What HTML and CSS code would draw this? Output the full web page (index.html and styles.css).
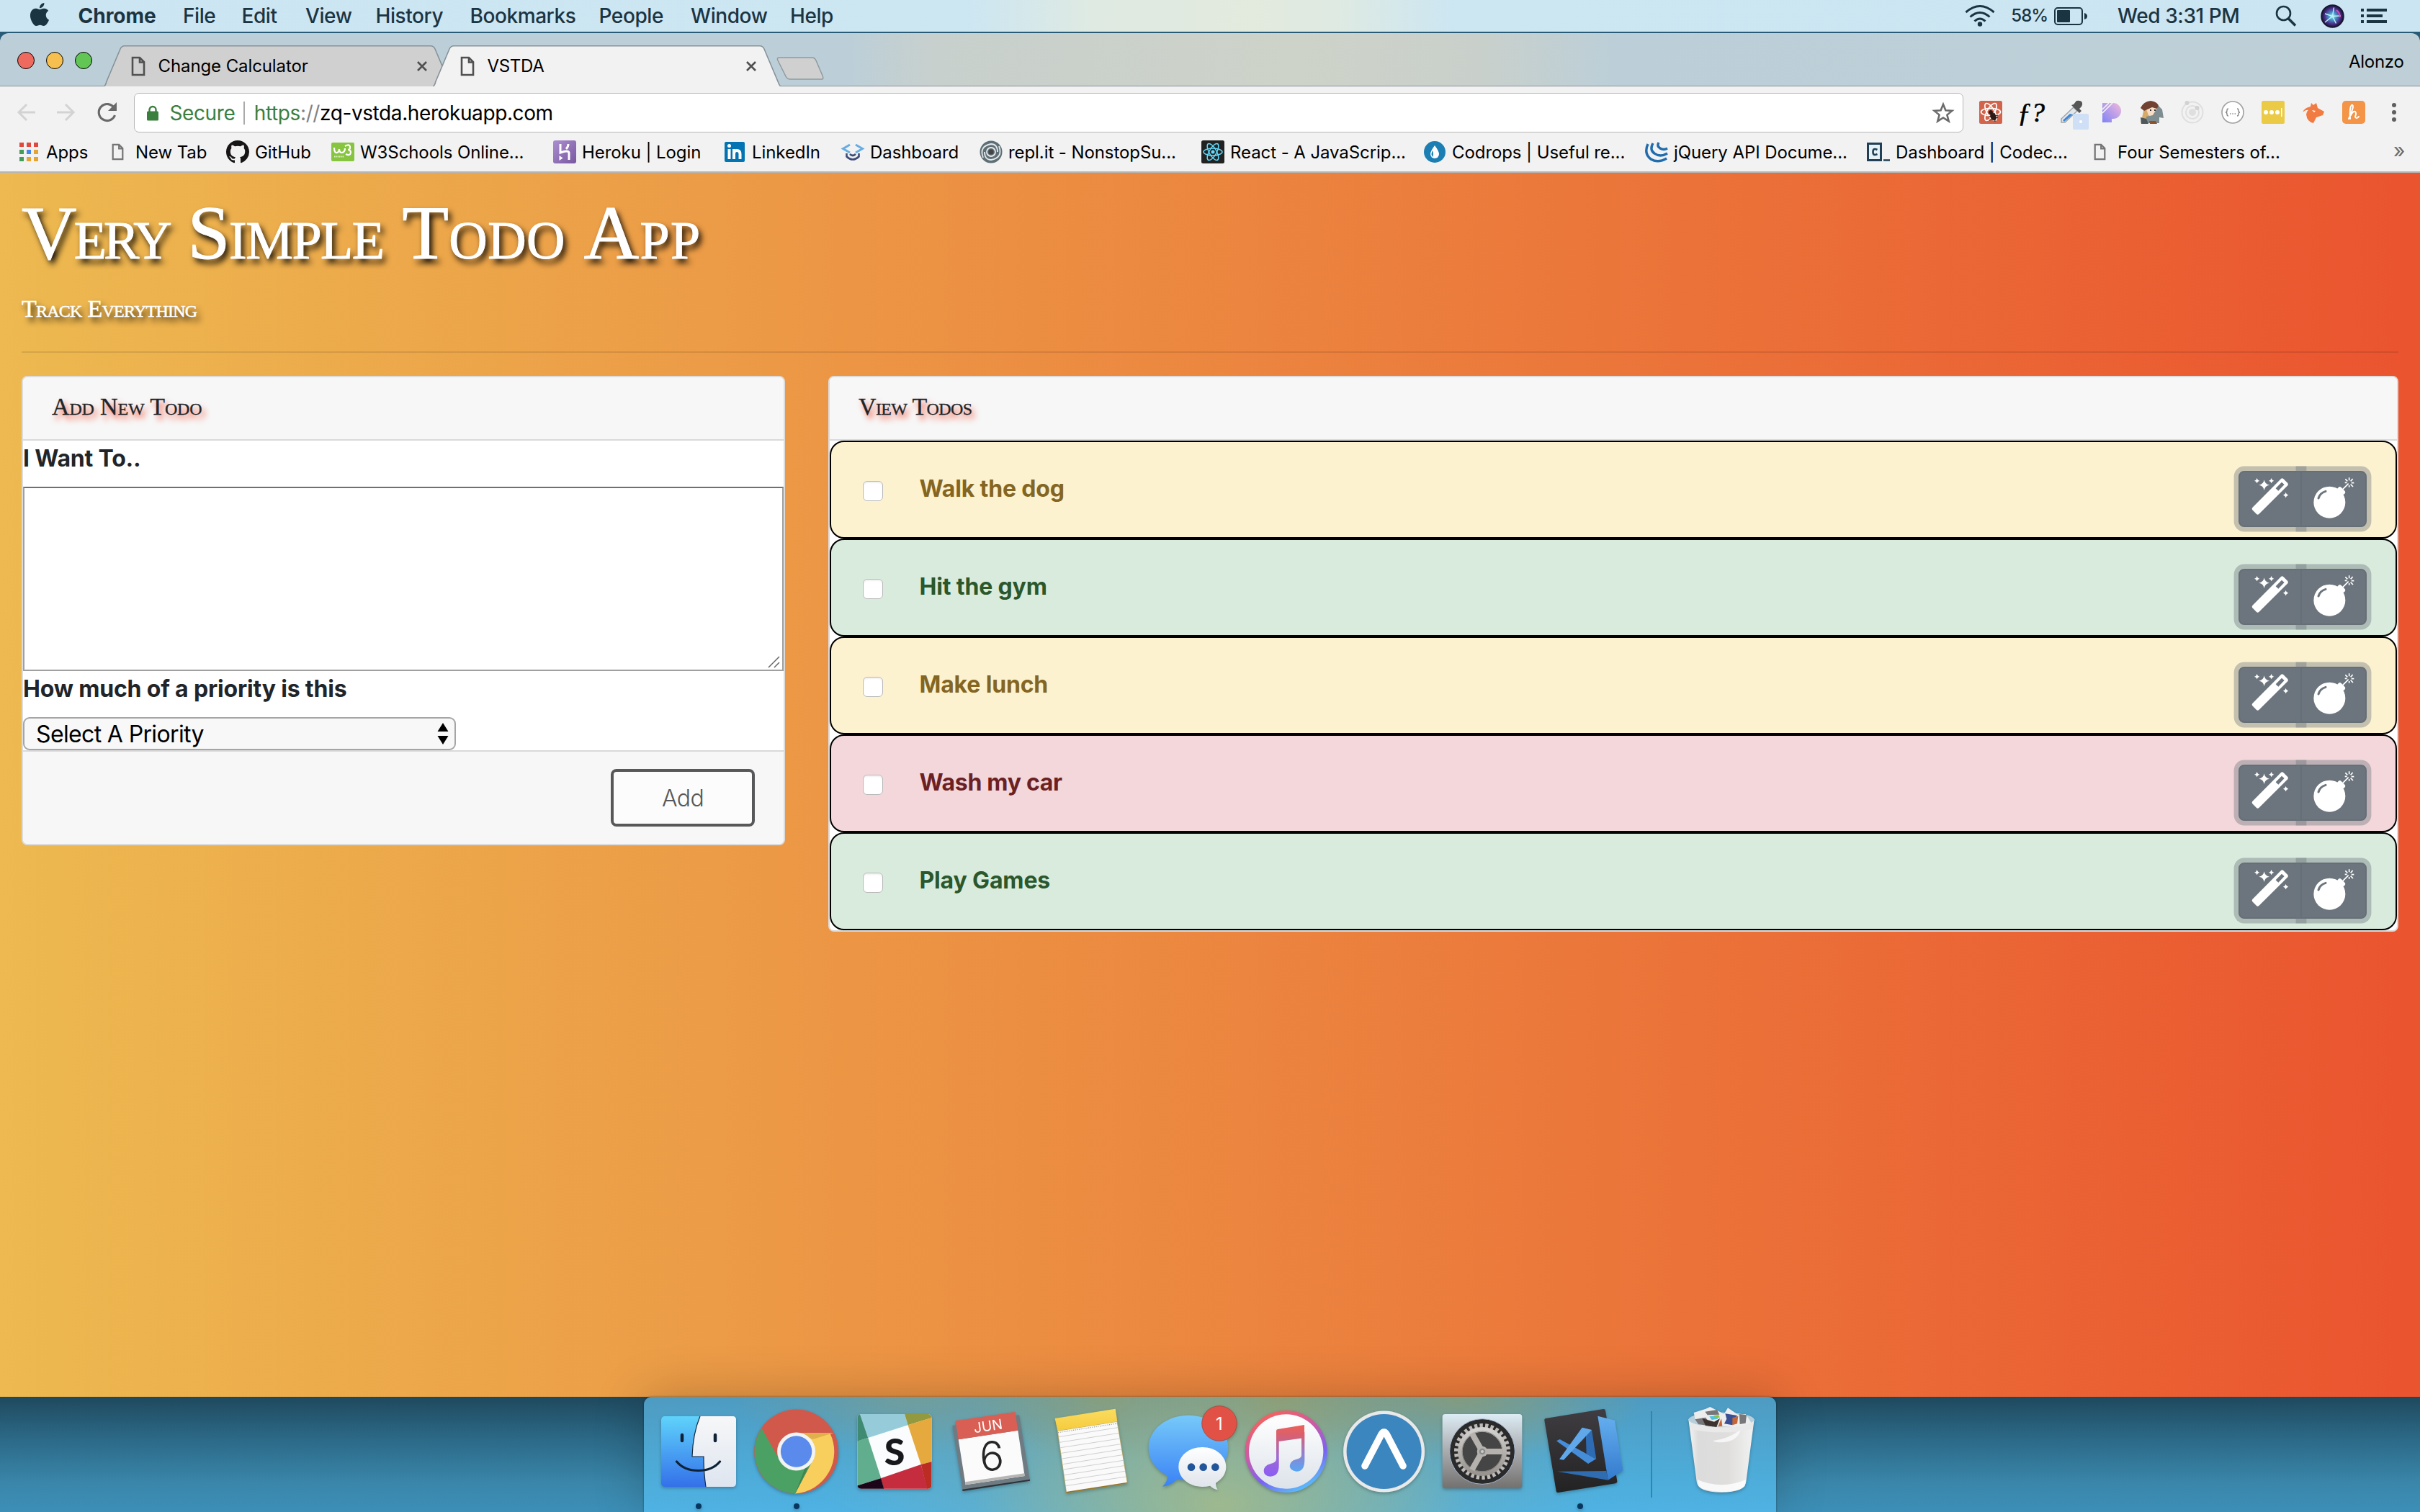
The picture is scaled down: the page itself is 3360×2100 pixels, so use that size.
FILE: index.html
```html
<!DOCTYPE html>
<html lang="en">
<head>
<meta charset="utf-8">
<title>VSTDA</title>
<link rel="stylesheet" href="styles.css">
</head>
<body>
<svg class="defs" aria-hidden="true">
  <defs>
    <symbol id="page" viewBox="0 0 20 28"><path d="M2 2h10l6 6v18H2zM12 2v6.500h6" fill="none" stroke="currentColor" stroke-width="2.600"/></symbol>
    <symbol id="close" viewBox="0 0 16 16"><path d="M2 2l12 12M14 2L2 14" stroke="#505050" stroke-width="2.600"/></symbol>
    <symbol id="tabshape" viewBox="0 0 483 57" preserveAspectRatio="none"><path d="M0 57C3 56 3 53 4 50L23 5Q25 .800 29 .800H454Q458 .800 460 5L479 50Q481 56 483 57" stroke="#859298" stroke-width="1.600"/></symbol>
    <symbol id="wand" viewBox="370 484 172 172">
      <path fill="#fff" fill-rule="evenodd" d="M502 496q5-4 10 0l18 18q4 5 0 10L410 643q-5 4-10 0l-17-17q-4-5 0-10zM505 510l-25 26 11 10 25-26z"/>
      <path fill="#fff" d="M432 500q3 19 22 22-19 3-22 22-3-19-22-22 19-3 22-22zM402 492q2 10 11 12-9 2-11 11-2-9-11-11 9-2 11-12zM462 492q2 10 11 12-9 2-11 11-2-9-11-11 9-2 11-12zM522 553q2 9 11 11-9 2-11 11-2-9-11-11 9-2 11-11z"/>
    </symbol>
    <symbol id="bomb" viewBox="626 484 188 184">
      <circle cx="702" cy="594" r="66" fill="#fff"/>
      <path d="M734 538l5-6q6-6 12 0l15 15q4 5 0 10l-6 6z" fill="#fff"/>
      <path d="M656 577q6-22 30-29" fill="none" stroke="#6c757d" stroke-width="9" stroke-linecap="round"/>
      <path d="M754 543l27-27M784 503v-12M790 506l9-10M793 513h11M790 519l10 10M784 523v8M777 506l-9-9M775 512h-9" fill="none" stroke="#fff" stroke-width="5"/>
    </symbol>
    <linearGradient id="gFinder" x2="0" y2="1"><stop stop-color="#5fd3fb"/><stop offset="1" stop-color="#3470ea"/></linearGradient>
    <linearGradient id="gFace" x2="0" y2="1"><stop stop-color="#f7f7f8"/><stop offset="1" stop-color="#dde5f0"/></linearGradient>
    <linearGradient id="gMsg" x2="0" y2="1"><stop stop-color="#76c9f9"/><stop offset="1" stop-color="#3a82f6"/></linearGradient>
    <linearGradient id="gNote" x2="0" y2="1"><stop stop-color="#ee6157"/><stop offset=".2" stop-color="#d8606f"/><stop offset=".6" stop-color="#a06bd0"/><stop offset="1" stop-color="#8b5cf6"/></linearGradient>
    <linearGradient id="gNote2" x2="0" y2="1"><stop stop-color="#e25a62"/><stop offset=".5" stop-color="#9a7cc8"/><stop offset="1" stop-color="#57a7f4"/></linearGradient>
    <linearGradient id="gRing" x1=".2" y1="0" x2=".7" y2="1"><stop stop-color="#fa6453"/><stop offset=".4" stop-color="#c95ba8"/><stop offset=".7" stop-color="#7a62f5"/><stop offset="1" stop-color="#56c5fa"/></linearGradient>
    <linearGradient id="gInner" x2="0" y2="1"><stop stop-color="#fff"/><stop offset="1" stop-color="#dde3ea"/></linearGradient>
    <linearGradient id="gPref" x2="0" y2="1"><stop stop-color="#dcecf4"/><stop offset=".5" stop-color="#a9abae"/><stop offset="1" stop-color="#73716f"/></linearGradient>
    <linearGradient id="gSteel" x2="0" y2="1"><stop stop-color="#d2d1cf"/><stop offset="1" stop-color="#98938e"/></linearGradient>
    <linearGradient id="gCode" x2="0" y2="1"><stop stop-color="#64aeee"/><stop offset="1" stop-color="#347bce"/></linearGradient>
    <linearGradient id="gDark" x2="0" y2="1"><stop stop-color="#3f3d41"/><stop offset="1" stop-color="#232223"/></linearGradient>
    <linearGradient id="gCup" x2="1" y2="0"><stop stop-color="#f4f4f4"/><stop offset=".15" stop-color="#dcdcdc"/><stop offset=".6" stop-color="#dfdedd"/><stop offset="1" stop-color="#f2f2f2"/></linearGradient>
    <linearGradient id="gYel" x2="0" y2="1"><stop stop-color="#fbdc60"/><stop offset="1" stop-color="#f5cb3c"/></linearGradient>
    <linearGradient id="gPan" x1="1" y1="0" x2="0" y2="1"><stop stop-color="#f3b9dc"/><stop offset="1" stop-color="#7f82f5"/></linearGradient>
    <linearGradient id="gHer" x2="1" y2="1"><stop stop-color="#ab8ed0"/><stop offset="1" stop-color="#79589f"/></linearGradient>
    <radialGradient id="gSiri"><stop stop-color="#c8f6f5"/><stop offset=".3" stop-color="#4a9fd0"/><stop offset=".7" stop-color="#4a2f8c"/><stop offset="1" stop-color="#12132c"/></radialGradient>
  </defs>
</svg>

<div class="desktop">
  <header class="menubar">
    <svg class="apple" viewBox="0 0 24 24"><path fill="#1b3442" d="M12.152 6.896c-.948 0-2.415-1.078-3.960-1.040-2.040.027-3.910 1.183-4.961 3.014-2.117 3.675-.546 9.103 1.519 12.090 1.013 1.454 2.208 3.090 3.792 3.039 1.520-.065 2.090-.987 3.935-.987 1.831 0 2.350.987 3.960.948 1.637-.026 2.676-1.480 3.676-2.948 1.156-1.688 1.636-3.325 1.662-3.415-.039-.013-3.182-1.221-3.220-4.857-.026-3.040 2.480-4.494 2.597-4.559-1.429-2.090-3.623-2.324-4.390-2.376-2-.156-3.675 1.090-4.610 1.090zM15.530 3.830c.843-1.012 1.400-2.427 1.245-3.830-1.207.052-2.662.805-3.532 1.818-.780.896-1.454 2.338-1.273 3.714 1.338.104 2.715-.688 3.559-1.701"/></svg>
    <nav class="menus"><b>Chrome</b><span>File</span><span>Edit</span><span>View</span><span>History</span><span>Bookmarks</span><span>People</span><span>Window</span><span>Help</span></nav>
    <div class="status">
      <svg width="42" height="30" viewBox="0 0 42 30"><g fill="none" stroke="#1b3442" stroke-width="3"><path d="M1.500 10Q21-7 40.500 10"/><path d="M7.500 16.500Q21 4.500 34.500 16.500"/><path d="M13.500 22.500Q21 15.500 28.500 22.500"/></g><circle cx="21" cy="26.500" r="3.200" fill="#1b3442"/></svg>
      <span class="pct">58%</span>
      <svg width="47" height="25" viewBox="0 0 47 25"><rect x="1" y="1" width="38" height="23" rx="4" fill="none" stroke="#1b3442" stroke-width="2"/><rect x="4" y="4" width="18" height="17" rx="1" fill="#1b3442"/><path d="M42 8q4 1 4 4.500T42 17z" fill="#1b3442"/></svg>
      <span>Wed 3:31 PM</span>
      <svg width="30" height="30" viewBox="0 0 30 30"><circle cx="11.500" cy="11.500" r="9.500" fill="none" stroke="#1b3442" stroke-width="2.600"/><path d="M18 18.500l10 10" stroke="#1b3442" stroke-width="3.600"/></svg>
      <svg width="33" height="33" viewBox="0 0 33 33"><circle cx="16.500" cy="16.500" r="15.500" fill="url(#gSiri)" stroke="#15152b" stroke-width="1.500"/><path d="M16.500 16.500L6 25M16.500 16.500l2-12M16.500 16.500L28 16M16.500 16.500l5 10M16.500 16.500L6 13" stroke="#b8f4f4" stroke-width="1.500"/><path d="M22 8q5 4 5 10" stroke="#d050b0" stroke-width="2" fill="none"/></svg>
      <svg width="36" height="20" viewBox="0 0 36 20"><path d="M0 2h4M8 2h28M0 10h4M8 10h22M0 18h4M8 18h28" stroke="#1b3442" stroke-width="4"/></svg>
    </div>
  </header>

  <section class="window">
    <div class="tabstrip">
      <div class="lights"><i class="red"></i><i class="amber"></i><i class="green"></i></div>
      <div class="tabs">
        <div class="tab"><svg class="shape" fill="#d0d0d0"><use href="#tabshape"/></svg><svg class="doc"><use href="#page"/></svg><span>Change Calculator</span><svg class="x"><use href="#close"/></svg></div>
        <div class="tab active"><svg class="shape" fill="#f2f2f2"><use href="#tabshape"/></svg><svg class="doc"><use href="#page"/></svg><span>VSTDA</span><svg class="x"><use href="#close"/></svg></div>
        <svg class="newtab" width="66" height="33" viewBox="0 0 66 33"><path d="M4 1h46q3 0 5 4l9 21q2 5-1 5H19q-4 0-6-4L2 5q-2-4 2-4z" fill="#d0d0d0" stroke="#8f9a9e" stroke-width="1.500"/></svg>
      </div>
      <span class="profile">Alonzo</span>
    </div>

    <div class="toolbar">
      <div class="navrow">
        <svg width="26" height="26" viewBox="0 0 26 26"><path d="M25 13H2M13 2L2 13l11 11" fill="none" stroke="#d3d3d3" stroke-width="3"/></svg>
        <svg width="26" height="26" viewBox="0 0 26 26"><path d="M0 13h23M12 2l11 11-11 11" fill="none" stroke="#d3d3d3" stroke-width="3"/></svg>
        <svg width="28" height="28" viewBox="0 0 28 28"><path d="M23.500 8A11.500 11.500 0 1 0 24.500 18" fill="none" stroke="#696969" stroke-width="3.200"/><path d="M27 0v12H15z" fill="#696969"/></svg>
        <div class="omnibox">
          <svg width="18" height="22" viewBox="0 0 18 22"><rect x="1" y="8.500" width="16" height="13" rx="1.500" fill="#3b7f3f"/><path d="M4.500 9V6.500a4.500 4.500 0 0 1 9 0V9" fill="none" stroke="#3b7f3f" stroke-width="2.400"/></svg>
          <span class="secure">Secure</span><i class="rule"></i>
          <span class="url"><em>https</em><s>://</s>zq-vstda.herokuapp.com</span>
          <svg class="star" width="30" height="29" viewBox="0 0 30 29"><path d="M15 3l3.400 8.300 8.900.6-6.900 5.700 2.300 8.700L15 21.500l-7.700 4.800 2.300-8.700-6.900-5.700 8.900-.600z" fill="none" stroke="#6b6b6b" stroke-width="2.600"/></svg>
        </div>
        <div class="exts">
          <svg viewBox="0 0 32 32"><rect width="32" height="32" rx="2.500" fill="#d2644b"/><g fill="none" stroke="#fff" stroke-width="1.700"><ellipse cx="16" cy="15.500" rx="13.500" ry="5.200"/><ellipse cx="16" cy="15.500" rx="13.500" ry="5.200" transform="rotate(60 16 15.500)"/><ellipse cx="16" cy="15.500" rx="13.500" ry="5.200" transform="rotate(120 16 15.500)"/></g><g fill="#2d1a16" stroke="#2d1a16"><circle cx="16" cy="16" r="2.500"/><ellipse cx="19.500" cy="22" rx="3.500" ry="5" transform="rotate(-25 19.500 22)"/><path d="M13 22l13-2M14 27l12-4M21 17l1 12" stroke-width="1.200"/></g></svg>
          <span class="fq">ƒ?</span>
          <svg viewBox="0 0 32 32"><path d="M19 9l5 5L7 30l-5 0 0-5z" fill="#dfe7ee" stroke="#a2a2a2" stroke-width="1.500"/><path d="M14 18l4 1L6 29l-2-2z" fill="#3d87d8"/><path d="M16 6l11 11 3-3-3-3q5-4 4-8t-8-3l-4 5z" fill="#565656"/><rect x="18" y="18" width="22" height="22" rx="2" fill="#cfdff5"/><circle cx="29" cy="29" r="2" fill="#fff"/></svg>
          <svg viewBox="0 0 32 32"><path d="M3 3h15a11 11 0 0 1 0 22h-2v5H3z" fill="url(#gPan)"/><path d="M3 12l9-9M3 17L17 3" stroke="#f2f2f2" stroke-width="1.700"/></svg>
          <svg viewBox="0 0 32 32"><path d="M5 8q-2 14-5 22h12l10-10V8z" fill="#d8aa67"/><path d="M7 9h15v8q-5 7-11 3z" fill="#f7ddc4"/><path d="M0 10Q4 1 14 0q10 1 12 9v3L16 9 5 14z" fill="#714231"/><path d="M8 22l9-2 8-13 5 5 2 12-6-1v8H7z" fill="#7d8d90"/><path d="M0 23l8 2 3 7H1z" fill="#4f5858"/><path d="M12 28h9l2 4H13z" fill="#90502b"/><path d="M13 13h2M19 13h2" stroke="#333" stroke-width="2"/></svg>
          <svg viewBox="0 0 32 32"><g fill="none" stroke="#dfdfdf" stroke-width="2"><circle cx="16" cy="16" r="14.500"/><circle cx="16" cy="16" r="9"/></g><circle cx="16" cy="16" r="5" fill="#dfdfdf"/><circle cx="8.500" cy="3" r="3" fill="#d2d2d2"/><circle cx="22.500" cy="10" r="3" fill="#d2d2d2"/></svg>
          <svg viewBox="0 0 32 32"><circle cx="16" cy="16" r="15" fill="#fff" stroke="#a0a0a0" stroke-width="1.600"/><path d="M10 11q-2 0-2 2.500t-2 2.500q2 0 2 2.500t2 2.500M22 11q2 0 2 2.500t2 2.500q-2 0-2 2.500t-2 2.500M12 18h1.500M15.300 18h1.500M18.600 18h1.500" fill="none" stroke="#8a8a8a" stroke-width="1.400"/></svg>
          <svg viewBox="0 0 32 32"><rect width="32" height="32" rx="2.500" fill="#ebca45"/><g fill="#fff"><circle cx="6" cy="16" r="3"/><circle cx="14" cy="16" r="3"/><circle cx="22" cy="16" r="3"/><rect x="27" y="10" width="1.500" height="12"/></g></svg>
          <svg viewBox="0 0 32 32"><path d="M12 8l1-5 3 3 4-3 2 7 9 5-2 5-9 3-4 8q-9-2-10-12 1-5 3-6-3-1-8 3 2-6 11-8z" fill="#f27b42"/><path d="M14 13l5 1-2 2z" fill="#fff"/></svg>
          <svg viewBox="0 0 32 32"><rect width="32" height="32" rx="5" fill="#f39446"/><path d="M9 25q4-8 6-16 0-4-2-3-3 3-2 19M12 20q3-6 6-5 2 2 0 7 1 4 5 0" fill="none" stroke="#fff" stroke-width="2" stroke-linecap="round"/></svg>
          <svg viewBox="0 0 32 32"><g fill="#5f5f5f"><circle cx="16" cy="6" r="3"/><circle cx="16" cy="16" r="3"/><circle cx="16" cy="26" r="3"/></g></svg>
        </div>
      </div>
      <div class="bookmarks">
        <a><svg viewBox="0 0 32 32"><path d="M3 3h6v6H3zM13 3h6v6h-6zM23 3h6v6h-6z" fill="#e1493c"/><path d="M3 13h6v6H3zM3 23h6v6H3z" fill="#459c58"/><path d="M13 13h6v6h-6z" fill="#4286f0"/><path d="M23 13h6v6h-6zM13 23h6v6h-6zM23 23h6v6h-6z" fill="#e6a533"/></svg>Apps</a>
        <a><svg viewBox="0 0 32 32" color="#747474"><use href="#page" x="7" y="4" width="17" height="24"/></svg>New Tab</a>
        <a><svg viewBox="0 0 16 16"><path fill="#171515" d="M8 0C3.580 0 0 3.580 0 8c0 3.540 2.290 6.530 5.470 7.590.4.070.55-.170.55-.380 0-.190-.010-.820-.010-1.490-2.010.370-2.530-.490-2.690-.940-.090-.230-.480-.940-.820-1.130-.280-.150-.680-.520-.010-.530.630-.010 1.080.580 1.230.820.720 1.210 1.870.870 2.330.660.070-.520.280-.870.510-1.070-1.780-.200-3.640-.890-3.640-3.950 0-.870.310-1.590.820-2.150-.080-.200-.360-1.020.080-2.120 0 0 .670-.210 2.200.820.640-.180 1.320-.270 2-.270s1.360.090 2 .270c1.530-1.040 2.200-.820 2.200-.820.440 1.100.160 1.920.080 2.120.510.560.820 1.270.820 2.150 0 3.070-1.870 3.750-3.650 3.950.290.250.540.730.540 1.480 0 1.070-.010 1.930-.010 2.200 0 .210.150.460.550.380A8.010 8.010 0 0 0 16 8c0-4.420-3.580-8-8-8z"/></svg>GitHub</a>
        <a><svg viewBox="0 0 32 32"><rect y="3" width="32" height="26" rx="2" fill="#87c540"/><path d="M4 10q0 8 4 7 3-1 3-5 0 5 4 5 4-1 4-6M19 8q7-4 7 2 0 3-3 3 4 0 4 4-1 5-7 2" fill="none" stroke="#fff" stroke-width="2.200"/><path d="M4 22.500h14" stroke="#dff0c4" stroke-width="2" stroke-dasharray="1.500 .800"/></svg>W3Schools Online...</a>
        <a><svg viewBox="0 0 32 32"><rect width="32" height="32" rx="3" fill="url(#gHer)"/><path d="M10 5v12q11-4 12 0v10M21 5q0 4-3 7" fill="none" stroke="#fff" stroke-width="3"/><path d="M8.500 21l5 3.500-5 3.500z" fill="#fff"/></svg>Heroku | Login</a>
        <a><svg viewBox="0 0 32 32"><rect x="2" y="2" width="28" height="28" rx="2" fill="#0274b3"/><path d="M8.500 12v14M15 26V12M15 19q0-5 4-5 4.500 0 4.500 5v7" fill="none" stroke="#fff" stroke-width="4"/><circle cx="8.500" cy="7.500" r="2.500" fill="#fff"/></svg>LinkedIn</a>
        <a><svg viewBox="0 0 32 32"><path d="M12 6L2.500 11.500 12 17M20 6l9.500 5.500L20 17" fill="none" stroke="#67ade3" stroke-width="3"/><path d="M7.500 18v4.500q8.500 8 17 0V18M12 19q4 4 8 0" fill="none" stroke="#3d4a78" stroke-width="2.600"/></svg>Dashboard</a>
        <a><svg viewBox="0 0 32 32"><circle cx="16" cy="16" r="15.500" fill="#5f6f76"/><g fill="none" stroke="#e4eaec" stroke-width="1.800"><path d="M5 24Q-1 8 16 5q9 0 9 11"/><path d="M27 8q6 16-11 19-9 0-9-11"/><circle cx="16" cy="16" r="6"/></g><circle cx="16" cy="16" r="3.500" fill="#444"/></svg>repl.it - NonstopSu...</a>
        <a><svg viewBox="0 0 32 32"><rect width="32" height="32" rx="2.500" fill="#222"/><g fill="none" stroke="#61dafb" stroke-width="1.500"><ellipse cx="16" cy="16" rx="13" ry="5"/><ellipse cx="16" cy="16" rx="13" ry="5" transform="rotate(60 16 16)"/><ellipse cx="16" cy="16" rx="13" ry="5" transform="rotate(120 16 16)"/></g><circle cx="16" cy="16" r="2.500" fill="#61dafb"/></svg>React - A JavaScrip...</a>
        <a><svg viewBox="0 0 32 32"><circle cx="16" cy="16" r="15" fill="#1c7fb4"/><path d="M16 7q6 8 6 12a6 6 0 0 1-12 0q0-4 6-12z" fill="#fff"/><path d="M13 14q-3 5 0 9 2-3 0-9z" fill="#1c7fb4"/></svg>Codrops | Useful re...</a>
        <a><svg viewBox="0 0 32 32"><g fill="none" stroke="#1f6cae" stroke-width="3.400"><path d="M4 5Q-2 18 8 26q10 6 22-1"/><path d="M11 4Q6 13 13 18q8 6 18 0"/><path d="M19 3q-3 5 2 8 5 3 10 0"/></g></svg>jQuery API Docume...</a>
        <a><svg viewBox="0 0 32 32"><rect x="1.500" y="4.500" width="18" height="23" fill="#e6f0f5" stroke="#1f4056" stroke-width="3"/><path d="M14.500 13q-6-3-6 3t6 3" fill="none" stroke="#1f4056" stroke-width="2.600"/><path d="M23 27.500h9" stroke="#1f4056" stroke-width="2.600"/></svg>Dashboard | Codec...</a>
        <a><svg viewBox="0 0 32 32" color="#747474"><use href="#page" x="7" y="4" width="17" height="24"/></svg>Four Semesters of...</a>
        <span class="more">»</span>
      </div>
    </div>

    <main class="app">
      <h1><span class="w1">Very</span> <span class="w2">Simple</span> <span class="w3">Todo</span> <span class="w4">App</span></h1>
      <p class="tagline">Track Everything</p>
      <hr>
      <div class="columns">
        <form class="card add">
          <div class="card-header">Add New Todo</div>
          <label for="todo">I Want To..</label>
          <div class="textarea" id="todo"><svg width="18" height="18" viewBox="0 0 18 18"><path d="M1 17L16 2M9 17l7-7" stroke="#666" stroke-width="1.500"/></svg></div>
          <label>How much of a priority is this</label>
          <div class="select"><span>Select A Priority</span><svg width="16" height="30" viewBox="0 0 16 30"><path d="M8 0l7.500 12H.500zM8 30l7.500-12H.500z"/></svg></div>
          <div class="card-footer"><button type="button">Add</button></div>
        </form>
        <section class="card view">
          <div class="card-header">View Todos</div>
          <ul>
            <li class="warn"><i></i><span>Walk the dog</span><div class="btns"><b><svg width="57.300" height="57.300"><use href="#wand"/></svg></b><b><svg width="62.700" height="61.300"><use href="#bomb"/></svg></b></div></li>
            <li class="ok"><i></i><span>Hit the gym</span><div class="btns"><b><svg width="57.300" height="57.300"><use href="#wand"/></svg></b><b><svg width="62.700" height="61.300"><use href="#bomb"/></svg></b></div></li>
            <li class="warn"><i></i><span>Make lunch</span><div class="btns"><b><svg width="57.300" height="57.300"><use href="#wand"/></svg></b><b><svg width="62.700" height="61.300"><use href="#bomb"/></svg></b></div></li>
            <li class="danger"><i></i><span>Wash my car</span><div class="btns"><b><svg width="57.300" height="57.300"><use href="#wand"/></svg></b><b><svg width="62.700" height="61.300"><use href="#bomb"/></svg></b></div></li>
            <li class="ok"><i></i><span>Play Games</span><div class="btns"><b><svg width="57.300" height="57.300"><use href="#wand"/></svg></b><b><svg width="62.700" height="61.300"><use href="#bomb"/></svg></b></div></li>
          </ul>
        </section>
      </div>
    </main>
  </section>

  <footer class="dock">
    <svg class="cell" viewBox="0 0 136 160">
      <rect x="16" y="27" width="104" height="98" rx="5" fill="url(#gFinder)"/>
      <path d="M70 27h45q5 0 5 5v88q0 5-5 5H78q-3-20-3-42H59q1-32 11-56z" fill="url(#gFace)"/>
      <path d="M70 27Q60 51 59 83h16q0 22 3 42" fill="none" stroke="#16283c" stroke-width="1.200"/>
      <path d="M45 53v8M91 53v8" stroke="#0e2236" stroke-width="4.500" stroke-linecap="round"/>
      <path d="M37.500 90Q48 102.500 67.500 102.500T97.500 90" fill="none" stroke="#0e2236" stroke-width="3.200" stroke-linecap="round"/>
      <circle cx="68" cy="152" r="4" fill="#06375f"/>
    </svg>
    <svg class="cell" viewBox="0 0 136 160">
      <circle cx="67.600" cy="76" r="58.500" fill="#d1594b"/>
      <path d="M67.600 50h46.500A58.500 58.500 0 0 1 66 134.500L90 89z" fill="#f8cf5c"/>
      <path d="M67.600 50h52l-29 9z" fill="#e0b04c"/>
      <path d="M19.500 43.500A58.500 58.500 0 0 0 66 134.500L90 89 67.600 102 45 89z" fill="#4ba164"/>
      <path d="M66 134.500L92 82 80 98z" fill="#3c8650"/>
      <circle cx="67.600" cy="76" r="26.500" fill="#f3f3f3"/><circle cx="67.600" cy="76" r="21.700" fill="#5a8bec"/>
      <circle cx="68" cy="152" r="4" fill="#06375f"/>
    </svg>
    <svg class="cell" viewBox="0 0 136 160">
      <clipPath id="cs"><rect x="16.400" y="24" width="103.100" height="103.700" rx="5"/></clipPath>
      <g clip-path="url(#cs)">
        <rect x="16" y="24" width="104" height="104" fill="#fbfcfd"/>
        <path d="M20 24h62l4.600 15.300L31.200 57z" fill="#96ccd9"/><path d="M16 24h4l11.200 33L16 62z" fill="#3e8a73"/>
        <path d="M82 24h38v5L86.600 39.300z" fill="#92993f"/><path d="M86.600 39.300L120 28.700V90l-15.300 4z" fill="#e5a93d"/>
        <path d="M104.700 94l15.300-4v38h-7z" fill="#bb2c22"/><path d="M49.300 113l55.400-19 9 34H53z" fill="#c52d3f"/>
        <path d="M16 61.500L31.200 57l18.100 56L16 123.500z" fill="#60ae8e"/><path d="M16 123.500L49.300 113l4 15H16z" fill="#1d0519"/>
      </g>
      <text x="68" y="94.500" class="slack">S</text>
    </svg>
    <svg class="cell" viewBox="0 0 408 480">
      <path d="M37 120l278-44 45 272-280 44z" fill="#6f7b83"/><path d="M78 386l282-42v6L80 393z" fill="#2d3338"/>
      <path d="M62 178l248-38 28 190L92 367z" fill="#fbfbfb"/><path d="M90 355l247-36 1 11L92 367z" fill="#b5b5b3"/>
      <path d="M50 100l248-37 12 77L62 178z" fill="#d95f54"/>
      <text x="185" y="142" transform="rotate(-8.500 185 118)" class="mon">JUN</text>
      <text x="201" y="307" transform="rotate(-3 201 250)" class="day">6</text>
    </svg>
    <svg class="cell" viewBox="408 0 408 480">
      <path d="M475 142l248-39 43 257-254 40z" fill="#fafafa" stroke="#b59b4a" stroke-width="2"/><path d="M510 396l256-40v5l-254 40z" fill="#93752b"/>
      <path d="M464 90l252-40 8 53-249 39z" fill="url(#gYel)"/>
      <path d="M477 149l247-38" stroke="#999" stroke-width="4" stroke-dasharray="3 5"/>
      <path d="M480 167l247-39M483 190l248-39M487 212l247-38M490 235l248-38M494 258l247-39M497 281l248-39M500 303l249-38M503 326l249-39M506 349l250-39M509 371l250-38" stroke="#c6c6c6" stroke-width="2.500"/>
    </svg>
    <svg class="cell" viewBox="816 0 408 480">
      <path d="M1020 77c92 0 166 60 166 135s-74 136-166 136q-24 0-46-4-30 27-62 30 20-18 22-44c-48-26-80-66-80-118 0-75 74-135 166-135z" fill="url(#gMsg)"/>
      <path d="M1078 210c56 0 99 36 99 82 0 29-17 52-43 67q-1 16 8 28-17-2-32-16-14 4-32 4c-56 0-99-37-99-83s43-82 99-82z" fill="url(#gInner)"/>
      <g fill="#23559a"><circle cx="1032" cy="293" r="16"/><circle cx="1082" cy="293" r="16"/><circle cx="1132" cy="293" r="16"/></g>
      <circle cx="1149" cy="111" r="73" fill="#e25145" stroke="#8b4740" stroke-width="2"/><text x="1148" y="137" class="badge">1</text>
    </svg>
    <svg class="cell" viewBox="1224 0 408 480">
      <circle cx="1427" cy="228" r="171" fill="url(#gRing)"/><circle cx="1427" cy="228" r="155" fill="url(#gInner)"/>
      <path d="M1392 135l111-18v54l-106 15v100q0 46-36 46-27-2-27-23 0-22 28-30 24-4 24-20V142q0-6 6-7z" fill="url(#gNote)"/>
      <path d="M1491 150l13-2v115q0 48-34 48-26-2-28-22 2-22 26-28 23-4 23-18z" fill="url(#gNote2)"/>
    </svg>
    <svg class="cell" viewBox="0 0 136 160">
      <circle cx="67.600" cy="76" r="56.500" fill="#e9e9e9"/><circle cx="67.600" cy="76" r="52" fill="#3c86bf"/>
      <path d="M41 96L64 52q3.600-6 7.200 0L94 96" fill="none" stroke="#fff" stroke-width="9.500" stroke-linecap="round" stroke-linejoin="round"/>
    </svg>
    <svg class="cell" viewBox="0 0 408 480">
      <rect x="38" y="72" width="332" height="310" rx="12" fill="url(#gPref)"/>
      <circle cx="204" cy="228" r="136" fill="#2a2a2b" stroke="#a9bdd6" stroke-width="3"/>
      <circle cx="204" cy="228" r="108" fill="none" stroke="#bdbab7" stroke-width="18" stroke-dasharray="13 9.620"/>
      <circle cx="204" cy="228" r="92" fill="#454545" stroke="url(#gSteel)" stroke-width="20"/>
      <circle cx="204" cy="228" r="84" fill="none" stroke="#777370" stroke-width="2"/>
      <path d="M204 228h86M204 228l-43-76M204 228l-43 76" stroke="#b5b2ae" stroke-width="24"/>
      <circle cx="204" cy="228" r="22" fill="#b5b2ae"/><circle cx="204" cy="228" r="13" fill="#8b8b8e"/><circle cx="204" cy="228" r="6" fill="#ccc"/>
    </svg>
    <svg class="cell" viewBox="408 0 408 480">
      <path d="M468 90l240-39q8-1 9 6l49 294q1 8-7 10l-239 38q-7 1-8-6L463 98q-1-7 5-8z" fill="url(#gDark)"/>
      <path d="M516 311l205-2 7 38z" fill="#2f6cb0"/>
      <path d="M685 80l71 18 34 209-62 40z" fill="url(#gCode)"/>
      <path d="M513 184l14-7 151 82-33 20z" fill="#458dd8"/><path d="M620 128l40 10 19 122-43-23V150z" fill="#2d6cb5"/><path d="M620 128l40 10-117 125-18-3z" fill="#60a8ea"/><path d="M636 175l2 62-36-24z" fill="#302f32"/>
      <circle cx="612" cy="456" r="12" fill="#06375f"/>
    </svg>
    <i class="sep"></i>
    <svg class="cell" viewBox="1002 0 408 480">
      <path d="M1063 94q35-28 137-28t137 28l-34 260q-4 44-103 44t-103-44z" fill="url(#gCup)"/>
      <ellipse cx="1200" cy="95" rx="137" ry="30" fill="#b7cfdb"/>
      <path d="M1085 66l50-16 18-8 40 20 18 10 16-26 44 30 30-4 26 40-70 14-60-4-76 2-30-30z" fill="#ededed"/>
      <path d="M1090 94l44-8 30 38-60-10zM1132 62l50-8 10 20-50 2zM1275 72l30 4-4 34-24 4z" fill="#77777a"/>
      <path d="M1120 90l50 14 24-14-14 36-46-6z" fill="#3c3230"/><path d="M1150 82l40-4-6 14-24 4z" fill="#4fc3e0"/><path d="M1168 78l20-2 6 10-18 2z" fill="#8cc63f"/>
      <path d="M1216 70l50 8-14 20-6 20-34-6 10-20z" fill="#394f96"/><path d="M1246 88l24-8-4 32-20 6zM1186 124l14-34 4 32z" fill="#c56636"/>
      <path d="M1066 104q50 24 134 24t134-24l-4 30q-60 14-130 14t-130-14z" fill="#e9e9e9"/>
      <path d="M1165 183q60-6 115-45-14 50-80 52-30 0-35-7z" fill="#fff" opacity=".7"/>
      <path d="M1100 345q100 44 202 0l-4 26q-20 24-98 25-84-4-96-26z" fill="#fff" opacity=".8"/>
    </svg>
  </footer>
</div>
</body>
</html>
```
FILE: styles.css
```css
* { box-sizing: border-box; }
body { margin: 0; font-family: Inter, "Liberation Sans", sans-serif; color: #000; }
svg { display: block; overflow: visible; flex: none; }
.defs { position: absolute; width: 0; height: 0; }

.desktop {
  position: relative;
  width: 3360px;
  height: 2100px;
  overflow: hidden;
  background: linear-gradient(#285b78 0, #285b78 1938px, #1f495e 1940px, #2c6a88 2000px, #3a86aa 2060px, #3c8fb8 2100px);
}

/* macOS menu bar */
.menubar {
  display: flex;
  align-items: center;
  height: 44px;
  padding-left: 39px;
  color: #1b3442;
  font-size: 28px;
  letter-spacing: -0.42px;
  white-space: nowrap;
  background: linear-gradient(90deg, #cce5f2 0, #cce6f2 1340px, #dfeae2 1520px, #e3eade 1740px, #dfeae2 1850px, #cce6f2 2020px, #cce5f2 3360px);
}
.apple { width: 32px; height: 32px; margin-top: -4px; }
.menus { display: grid; grid-template-columns: 145.5px 81.5px 88.5px 97.5px 131px 179px 127.5px 138px 90px; margin-left: 37.5px; }
.menus b { letter-spacing: 0; }
.menus span, .status span { font-weight: 450; }
.status { display: grid; grid-template-columns: 64px 59.8px 88px 219px 63px 56px 82px; align-items: center; margin-left: auto; }
.status .pct { font-size: 24px; letter-spacing: -0.9px; margin-top: -2px; }

/* Browser window */
.window { display: flex; flex-direction: column; height: 1894px; margin-top: 2px; border-radius: 12px 12px 0 0; overflow: hidden; }
.tabstrip {
  display: flex;
  height: 74px;
  border-bottom: 1.5px solid #859298;
  background: linear-gradient(90deg, #bccfd8 0, #bccfd8 1180px, #c8d0cd 1300px, #cad1cb 1500px, #ced3c9 1800px, #c9d0cb 2050px, #bccfd8 2240px, #becfd7 3360px);
}
.lights { display: flex; gap: 16px; padding: 26px 0 0 24px; width: 144px; }
.lights i { width: 24px; height: 24px; border-radius: 50%; border: 1.5px solid; }
.red { background: #ee6a5e; border-color: #d9574c; }
.amber { background: #f6bf50; border-color: #dfa63d; }
.green { background: #62c655; border-color: #4eab42; }
.tabs { display: flex; padding-top: 17px; font-size: 24px; letter-spacing: -0.1px; }
.tab { position: relative; display: flex; align-items: center; width: 483px; height: 57px; padding: 0 33px 0 38px; margin-right: -26px; }
.tab .shape { position: absolute; left: 0; top: 0; width: 483px; height: 57px; }
.tab.active { z-index: 1; letter-spacing: -0.3px; }
.tab .doc { position: relative; width: 20px; height: 28px; margin-right: 17.5px; color: #505050; }
.tab span { position: relative; }
.tab .x { position: relative; width: 16px; height: 16px; margin-left: auto; }
.newtab { margin: 16px 0 0 20px; }
.profile { margin: 25px 22.5px 0 auto; font-size: 24px; line-height: 30px; letter-spacing: -0.3px; }

.toolbar { height: 120px; background: #f2f2f2; border-bottom: 2px solid #b5b5b5; }
.navrow { display: flex; align-items: center; height: 72px; padding-left: 24px; }
.navrow > svg:nth-child(1) { margin-right: 29px; }
.navrow > svg:nth-child(2) { margin-right: 30px; }
.navrow > svg:nth-child(3) { margin-right: 23px; }
.omnibox { display: flex; align-items: center; width: 2540px; height: 55px; padding: 1px 12px 0 16px; border: 1.5px solid #b6b6b6; border-radius: 7px; background: #fff; font-size: 28px; letter-spacing: -0.4px; }
.secure { color: #3b7f3f; margin-left: 14.5px; }
.rule { width: 1.5px; height: 32px; background: #ababab; margin: 0 13px 0 12px; }
.url em { color: #3b7f3f; font-style: normal; }
.url s { color: #828282; text-decoration: none; }
.star { margin-left: auto; }
.exts { display: flex; align-items: center; margin-left: 10px; }
.exts > * { width: 32px; height: 32px; margin: 0 12px; }
.fq { font: italic 38px/32px "Liberation Serif", serif; -webkit-text-stroke: 0.6px #000; text-indent: -3px; white-space: nowrap; }
.bookmarks {
  display: grid;
  grid-template-columns: 124px 166px 146px 308px 236px 164px 192px 308px 308px 308px 308px 308px 423px auto;
  align-items: center;
  height: 38px;
  padding-left: 24px;
  font-size: 24px;
  letter-spacing: -0.08px;
  white-space: nowrap;
}
.bookmarks a { display: flex; align-items: center; gap: 8px; }
.bookmarks a svg { width: 32px; height: 32px; }
.more { color: #6a6a6a; font-size: 28px; line-height: 24px; margin-top: -4px; }

/* Todo page */
.app { flex: 1; padding: 24px 30px 0; background: linear-gradient(90deg, #edb950, #ea542f); }
h1, .tagline, .card-header { font-family: Palatino, "Liberation Serif", serif; font-variant: small-caps; font-weight: 400; }
h1 { margin: 0; font-size: 106px; line-height: 120px; letter-spacing: -0.85px; color: #fff; -webkit-text-stroke: 1px #fff; text-shadow: 4px 6px 8px #000; }
.w1 { letter-spacing: -3.9px; }
.w2 { letter-spacing: -1.5px; }
.w3 { letter-spacing: 0.4px; }
.w4 { letter-spacing: 1.4px; }
.tagline { margin: 25px 0 39px; font-size: 34px; line-height: 40px; letter-spacing: -0.75px; color: #fff; -webkit-text-stroke: 0.5px #fff; text-shadow: 4px 6px 8px #000; }
hr { height: 2px; margin: 0 0 32px; border: 0; background: rgba(0, 0, 0, 0.1); }
.columns { display: grid; grid-template-columns: 1060px 2180px; gap: 60px; align-items: start; }
.card { border: 2px solid #dcdcdc; border-radius: 8px; background: #fff; font-size: 32px; line-height: 48px; overflow: hidden; }
.card-header { height: 88px; padding: 17px 40px; background: #f7f7f7; border-bottom: 2px solid #d9d9d9; font-size: 34px; letter-spacing: -0.15px; color: #212529; -webkit-text-stroke: 0.3px #212529; text-shadow: 4px 6px 8px #f0452a; }
.view .card-header { letter-spacing: -0.65px; }
label { display: block; height: 48px; margin-bottom: 16px; padding-top: 1px; font-weight: 700; letter-spacing: -0.18px; color: #212529; }
.textarea { display: flex; align-items: flex-end; justify-content: flex-end; height: 256px; padding: 2px; border: 2px solid #a0a0a0; border-top-color: #707070; }
.select { display: flex; align-items: center; justify-content: space-between; width: 601px; height: 46px; padding: 0 8px 0 16px; border: 2px solid #a5a5a5; border-radius: 9px; background: #f8f8f8; letter-spacing: -0.64px; }
.select span { margin-top: 1px; }
.card-footer { display: flex; justify-content: flex-end; height: 130px; padding: 24px 40px; border-top: 2px solid #d9d9d9; background: #f7f7f7; }
button { width: 200px; height: 80px; padding: 0; border: 4px solid #57585a; border-radius: 8px; background: #fcfcfc; color: #57585a; font: 350 32px Inter, sans-serif; letter-spacing: -0.6px; }

ul { margin: 0; padding: 0; list-style: none; }
li { display: flex; align-items: flex-start; height: 136px; padding: 40px; border: 2px solid #000; border-radius: 20px; font-weight: 700; letter-spacing: -0.15px; }
li > span { margin-top: 1px; }
li > i { width: 28px; height: 28px; margin: 14px 50.500px 0 4px; border: 1.5px solid #b9b9b9; border-radius: 6px; background: #fff; box-shadow: inset 0 2px 2px rgba(0, 0, 0, 0.06); }
.warn { background: #fdf2d0; color: #846521; }
.ok { background: #d9ebdc; color: #2a572c; }
.danger { background: #f3d7da; color: #6b2124; }
.danger span { letter-spacing: -0.3px; }
.btns { display: flex; margin-left: auto; }
.btns b { height: 78px; border: 2px solid #666e76; background: #6c757d; box-shadow: 0 0 0 6.4px rgba(108, 117, 125, 0.4); }
.btns b:first-child { width: 88px; padding: 5px 13px; border-radius: 8px 0 0 8px; }
.btns b:last-child { width: 92px; margin-left: -2px; padding: 5px 12.700px; border-radius: 0 8px 8px 0; position: relative; }

/* Dock */
.dock {
  position: absolute;
  left: 894px;
  top: 1940px;
  display: flex;
  width: 1572px;
  height: 160px;
  padding-left: 8px;
  border-radius: 11px 11px 0 0;
  box-shadow: 0 0 3px rgba(0, 0, 0, 0.4), 0 0 70px rgba(0, 0, 0, 0.22);
  background:
    radial-gradient(ellipse 190px 90px at 640px 0, rgba(146, 156, 108, 0.75), transparent),
    radial-gradient(ellipse 200px 90px at 880px 0, rgba(152, 156, 100, 0.75), transparent),
    radial-gradient(ellipse 260px 90px at 1130px 0, rgba(142, 154, 112, 0.8), transparent),
    radial-gradient(ellipse 260px 80px at 380px 0, rgba(120, 158, 148, 0.8), transparent),
    radial-gradient(ellipse 340px 180px at 800px 150px, rgba(160, 185, 140, 0.95), transparent),
    radial-gradient(ellipse 560px 220px at 790px 80px, rgba(130, 170, 160, 0.8), transparent),
    linear-gradient(#4e9bc1, #4daad6 60%, #4fb2e3);
}
.cell { width: 136px; height: 160px; filter: drop-shadow(0 2px 2px rgba(0, 0, 0, 0.25)); }
.sep { width: 2px; height: 120px; margin: 20px 30px; background: #2f86ae; }
.slack { font: 900 52px Lato, sans-serif; text-anchor: middle; fill: #16181c; }
.mon { font: 400 58px Inter, sans-serif; text-anchor: middle; fill: #fff; }
.day { font: 300 168px Inter, sans-serif; text-anchor: middle; fill: #262626; }
.badge { font: 400 74px Inter, sans-serif; text-anchor: middle; fill: #fff; }
```
